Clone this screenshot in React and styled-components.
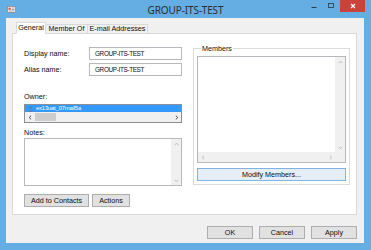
import React from 'react';
import styled, { createGlobalStyle } from 'styled-components';

const GlobalStyle = createGlobalStyle`
	html, body {
		margin: 0;
		padding: 0;
		background: #64aee4;
	}
	body {
		font-family: 'Liberation Sans', Arial, sans-serif;
		font-size: 7.2px;
		color: #0d0d0d;
	}
	* {
		box-sizing: border-box;
	}
`;

const Frame = styled.div`
	width: 371px;
	height: 250px;
	display: flex;
	flex-direction: column;
	background: #64aee4;
	overflow: hidden;
`;

const TitleBar = styled.div`
	height: 18px;
	display: grid;
	grid-template-columns: 1fr auto 1fr;
	align-items: start;
`;

const AppIcon = styled.div`
	padding: 6px 0 0 7px;
	display: flex;
`;

const Title = styled.div`
	font-family: 'Noto Sans', sans-serif;
	font-size: 10px;
	line-height: 20px;
	color: #2d2d2d;
	letter-spacing: -0.1px;
`;

const Controls = styled.div`
	justify-self: end;
	display: flex;
	align-items: flex-start;
	margin-right: 6px;
`;

const ControlButton = styled.div`
	width: ${(p) => p.$w}px;
	height: 12px;
	display: flex;
	align-items: center;
	justify-content: center;
	background: ${(p) => (p.$close ? '#c9433a' : 'transparent')};
`;

const Client = styled.div`
	flex: 1;
	margin: 0 7px 7px 6px;
	padding: 5px 7px 0 6px;
	background: #f0f0f0;
	display: flex;
	flex-direction: column;
`;

const TabStrip = styled.div`
	display: flex;
	align-items: flex-end;
	height: 11px;
	margin: 0 0 -1px 4px;
	position: relative;
	z-index: 1;
`;

const Tab = styled.div`
	width: ${(p) => p.$w}px;
	height: ${(p) => (p.$active ? 12 : 10)}px;
	display: flex;
	align-items: center;
	justify-content: center;
	background: ${(p) => (p.$active ? '#ffffff' : '#f0f0f0')};
	border: 1px solid #d9d9d9;
	border-bottom: ${(p) => (p.$active ? '1px solid #ffffff' : '1px solid #d9d9d9')};
	border-left: ${(p) => (p.$first ? '1px solid #d9d9d9' : 'none')};
	line-height: 1;
`;

const Panel = styled.div`
	height: 182px;
	background: #ffffff;
	border: 1px solid #d9d9d9;
	display: flex;
	gap: 11px;
	padding: 10px 0 0 11px;
`;

const LeftColumn = styled.div`
	width: 158px;
	display: flex;
	flex-direction: column;
	padding-top: 3px;
`;

const FieldRow = styled.div`
	display: flex;
	align-items: center;
	height: 13px;
	margin-bottom: 3px;
`;

const FieldLabel = styled.div`
	width: 65px;
`;

const TextBox = styled.div`
	width: 93px;
	height: 13px;
	border: 1px solid #b6b8bd;
	padding: 0 5px;
	display: flex;
	align-items: center;
	font-size: 6.4px;
	letter-spacing: -0.35px;
`;

const SectionLabel = styled.div`
	line-height: 10px;
	margin: ${(p) => p.$top}px 0 ${(p) => p.$bottom}px;
`;

const ListBox = styled.div`
	height: ${(p) => p.$h}px;
	border: 1px solid ${(p) => (p.$dark ? '#8c8f96' : '#b6b8bd')};
	display: flex;
	flex-direction: ${(p) => (p.$row ? 'row' : 'column')};
	background: #ffffff;
`;

const SelectedItem = styled.div`
	height: 7px;
	background: #3399ff;
	color: #ffffff;
	display: flex;
	align-items: center;
	gap: 3px;
	padding-left: 3px;
	font-size: 5.8px;
	letter-spacing: -0.15px;
	line-height: 1;
`;

const ListBody = styled.div`
	flex: 1;
	display: flex;
`;

const ListSpace = styled.div`
	flex: 1;
`;

const HScroll = styled.div`
	height: 10px;
	display: flex;
	align-items: stretch;
	background: #f0f0f0;
`;

const VScroll = styled.div`
	width: 10px;
	display: flex;
	flex-direction: column;
	justify-content: space-between;
	background: #f0f0f0;
`;

const ArrowCell = styled.div`
	width: 10px;
	height: 10px;
	display: flex;
	align-items: center;
	justify-content: center;
`;

const Track = styled.div`
	flex: 1;
	display: flex;
	align-items: center;
`;

const Thumb = styled.div`
	width: 21px;
	height: 8px;
	background: #cdcdcd;
`;

const Corner = styled.div`
	width: 10px;
	background: #f0f0f0;
`;

const ButtonRow = styled.div`
	display: flex;
	gap: 3px;
	margin-top: ${(p) => p.$top || 0}px;
`;

const Button = styled.div`
	height: 13px;
	width: ${(p) => (p.$w ? `${p.$w}px` : 'auto')};
	padding: 0 6px;
	display: flex;
	align-items: center;
	justify-content: center;
	background: ${(p) => (p.$default ? '#e5eef7' : '#e1e1e1')};
	border: 1px solid ${(p) => (p.$default ? '#7fb3e3' : '#adadad')};
	line-height: 1;
`;

const GroupBox = styled.fieldset`
	width: 157px;
	height: 141px;
	margin: 0;
	padding: 3px 3px 0;
	border: 1px solid #dcdcdc;
	display: flex;
	flex-direction: column;
	gap: 5px;
`;

const Legend = styled.legend`
	padding: 0 1px;
	margin-left: 4px;
	line-height: 9px;
`;

const Footer = styled.div`
	display: flex;
	justify-content: flex-end;
	gap: 6px;
	margin-top: 11px;
`;

const Chevron = ({ dir, dark }) => {
	const rot = { left: 0, up: 90, right: 180, down: 270 }[dir];
	return (
		<svg width="5" height="5" viewBox="0 0 5 5" style={{ transform: `rotate(${rot}deg)` }}>
			<polyline
				points="3.2,0.6 1.2,2.5 3.2,4.4"
				fill="none"
				stroke={dark ? '#404040' : '#b5b5b5'}
				strokeWidth="0.9"
			/>
		</svg>
	);
};

const UserIcon = () => (
	<svg width="5" height="6" viewBox="0 0 5 6">
		<circle cx="2.5" cy="1.6" r="1.3" fill="#6d7d8e" />
		<path d="M0.3 6 C0.3 3.8 4.7 3.8 4.7 6 Z" fill="#6d7d8e" />
	</svg>
);

const ContactIcon = () => (
	<svg width="9" height="7" viewBox="0 0 9 7">
		<rect x="0.5" y="0.5" width="8" height="6" fill="#ffffff" stroke="#8a8a8a" strokeWidth="0.8" />
		<rect x="1.4" y="1.6" width="2.4" height="2.2" fill="#d4574c" />
		<line x1="4.6" y1="2" x2="7.6" y2="2" stroke="#7a7a7a" strokeWidth="0.7" />
		<line x1="4.6" y1="3.5" x2="7.6" y2="3.5" stroke="#7a7a7a" strokeWidth="0.7" />
		<line x1="1.4" y1="5" x2="7.6" y2="5" stroke="#7a7a7a" strokeWidth="0.7" />
	</svg>
);

const App = () => {
	return (
		<React.Fragment>
			<GlobalStyle />
			<Frame>
				<TitleBar>
					<AppIcon>
						<ContactIcon />
					</AppIcon>
					<Title>GROUP-ITS-TEST</Title>
					<Controls>
						<ControlButton $w={14}>
							<svg width="6" height="6" viewBox="0 0 6 6">
								<line x1="0.5" y1="4.5" x2="5.5" y2="4.5" stroke="#2a3a4a" strokeWidth="1" />
							</svg>
						</ControlButton>
						<ControlButton $w={19}>
							<svg width="6" height="6" viewBox="0 0 6 6">
								<rect x="0.5" y="0.5" width="5" height="4" fill="none" stroke="#2a3a4a" strokeWidth="0.8" />
							</svg>
						</ControlButton>
						<ControlButton $w={25} $close>
							<svg width="6" height="6" viewBox="0 0 6 6">
								<path d="M1 1 L5 5 M5 1 L1 5" stroke="#ffffff" strokeWidth="1.2" />
							</svg>
						</ControlButton>
					</Controls>
				</TitleBar>
				<Client>
					<TabStrip>
						<Tab $active $first $w={30}>General</Tab>
						<Tab $w={42}>Member Of</Tab>
						<Tab $w={60}>E-mail Addresses</Tab>
					</TabStrip>
					<Panel>
						<LeftColumn>
							<FieldRow>
								<FieldLabel>Display name:</FieldLabel>
								<TextBox>GROUP-ITS-TEST</TextBox>
							</FieldRow>
							<FieldRow>
								<FieldLabel>Alias name:</FieldLabel>
								<TextBox>GROUP-ITS-TEST</TextBox>
							</FieldRow>
							<SectionLabel $top={13} $bottom={2}>Owner:</SectionLabel>
							<ListBox $h={19} $dark>
								<SelectedItem>
									<UserIcon />
									ex13uat_07mail5a
								</SelectedItem>
								<HScroll>
									<ArrowCell>
										<Chevron dir="left" dark />
									</ArrowCell>
									<Track>
										<Thumb />
									</Track>
									<ArrowCell>
										<Chevron dir="right" dark />
									</ArrowCell>
								</HScroll>
							</ListBox>
							<SectionLabel $top={5} $bottom={0}>Notes:</SectionLabel>
							<ListBox $h={48} $row>
								<ListSpace />
								<VScroll>
									<ArrowCell>
										<Chevron dir="up" />
									</ArrowCell>
									<ArrowCell>
										<Chevron dir="down" />
									</ArrowCell>
								</VScroll>
							</ListBox>
							<ButtonRow $top={8}>
								<Button>Add to Contacts</Button>
								<Button>Actions</Button>
							</ButtonRow>
						</LeftColumn>
						<GroupBox>
							<Legend>Members</Legend>
							<ListBox $h={107}>
								<ListBody>
									<ListSpace />
									<VScroll>
										<ArrowCell>
											<Chevron dir="up" />
										</ArrowCell>
										<ArrowCell>
											<Chevron dir="down" />
										</ArrowCell>
									</VScroll>
								</ListBody>
								<HScroll>
									<ArrowCell>
										<Chevron dir="left" />
									</ArrowCell>
									<Track />
									<ArrowCell>
										<Chevron dir="right" />
									</ArrowCell>
									<Corner />
								</HScroll>
							</ListBox>
							<Button $default>Modify Members...</Button>
						</GroupBox>
					</Panel>
					<Footer>
						<Button $w={46}>OK</Button>
						<Button $w={46}>Cancel</Button>
						<Button $w={46}>Apply</Button>
					</Footer>
				</Client>
			</Frame>
		</React.Fragment>
	);
};

export default App;
